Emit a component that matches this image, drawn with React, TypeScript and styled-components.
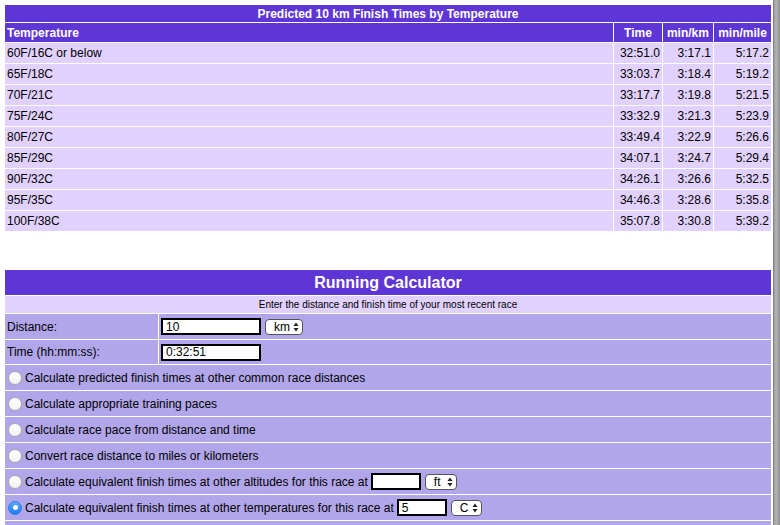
import React from "react";
import styled, { createGlobalStyle } from "styled-components";

const Global = createGlobalStyle`
  html, body { margin: 0; padding: 0; background: #fff; }
  body { font-family: "Liberation Sans", Arial, Helvetica, sans-serif; color: #000; }
`;

const PURPLE = "#5f36d6";
const LIGHT = "#e1d1fe";
const MID = "#b1a6ea";

const Page = styled.div`
  display: flex;
  width: 780px;
  height: 525px;
  overflow: hidden;
`;

const Content = styled.div`
  flex: 1;
  padding: 4px 1px 0 4px;
  display: flex;
  flex-direction: column;
  gap: 37px;
  min-width: 0;
`;

const Edge = styled.div`
  width: 7px;
  flex: none;
  background: linear-gradient(to right, #6d6d6d 0px, #9a9a9a 1px, #b4b4b4 3px, #9c9c9c 6px, #8a8a8a 7px);
`;

const Table = styled.table`
  width: 100%;
  border-collapse: separate;
  border-spacing: 1px;
  background: #fff;
  table-layout: fixed;
  font-size: 12px;
`;

const TitleCell = styled.th<{ $h: number; $size: number }>`
  background: ${PURPLE};
  color: #fff;
  font-weight: bold;
  font-size: ${(p) => p.$size}px;
  height: ${(p) => p.$h}px;
  padding: 0;
  text-align: center;
  vertical-align: middle;
`;

const HeadCell = styled.th<{ $align?: string }>`
  background: ${PURPLE};
  color: #fff;
  font-weight: bold;
  font-size: 12px;
  height: 19px;
  padding: 0 2px;
  text-align: ${(p) => p.$align || "center"};
  vertical-align: middle;
  white-space: nowrap;
`;

const DataCell = styled.td<{ $align?: string }>`
  background: ${LIGHT};
  height: 20px;
  padding: 0 2px;
  text-align: ${(p) => p.$align || "left"};
  vertical-align: middle;
  white-space: nowrap;
`;

const SubCell = styled.td`
  background: ${LIGHT};
  height: 17px;
  padding: 0;
  font-size: 10px;
  text-align: center;
  vertical-align: middle;
`;

const FormCell = styled.td<{ $h: number }>`
  background: ${MID};
  height: ${(p) => p.$h}px;
  padding: 0 2px;
  font-size: 12px;
  vertical-align: middle;
  white-space: nowrap;
`;

const Inline = styled.div`
  display: flex;
  align-items: center;
  gap: 4px;
`;

const RadioLine = styled.label`
  display: flex;
  align-items: center;
  gap: 3px;
  font-size: 12px;
`;

const Radio = styled.span<{ $on?: boolean }>`
  width: 14px;
  height: 14px;
  box-sizing: border-box;
  border-radius: 50%;
  flex: none;
  margin-left: 1px;
  display: flex;
  align-items: center;
  justify-content: center;
  border: 1px solid ${(p) => (p.$on ? "#2e7fe8" : "#a9a9a9")};
  background: ${(p) =>
    p.$on ? "linear-gradient(#5aa6ff, #1f7cf0)" : "linear-gradient(#ffffff, #f2f2f2)"};
  &::after {
    content: "";
    display: ${(p) => (p.$on ? "block" : "none")};
    width: 5px;
    height: 5px;
    border-radius: 50%;
    background: #fff;
  }
`;

const TextBox = styled.span<{ $w: number }>`
  display: inline-flex;
  align-items: center;
  box-sizing: border-box;
  width: ${(p) => p.$w}px;
  height: 17px;
  border: 2px solid #000;
  background: #fff;
  padding: 0 3px;
  font-size: 12px;
  flex: none;
`;

const Select = styled.span<{ $w: number }>`
  display: inline-flex;
  align-items: center;
  justify-content: space-between;
  box-sizing: border-box;
  width: ${(p) => p.$w}px;
  height: 16px;
  border: 1px solid #555;
  border-radius: 4px;
  background: #fff;
  padding: 0 3px 0 8px;
  font-size: 12px;
  flex: none;
`;

const Arrows = () => (
  <svg width="6" height="10" viewBox="0 0 6 10">
    <path d="M3 0.5 L5.5 4 L0.5 4 Z" fill="#222" />
    <path d="M3 9.5 L5.5 6 L0.5 6 Z" fill="#222" />
  </svg>
);

const rows: [string, string, string, string][] = [
  ["60F/16C or below", "32:51.0", "3:17.1", "5:17.2"],
  ["65F/18C", "33:03.7", "3:18.4", "5:19.2"],
  ["70F/21C", "33:17.7", "3:19.8", "5:21.5"],
  ["75F/24C", "33:32.9", "3:21.3", "5:23.9"],
  ["80F/27C", "33:49.4", "3:22.9", "5:26.6"],
  ["85F/29C", "34:07.1", "3:24.7", "5:29.4"],
  ["90F/32C", "34:26.1", "3:26.6", "5:32.5"],
  ["95F/35C", "34:46.3", "3:28.6", "5:35.8"],
  ["100F/38C", "35:07.8", "3:30.8", "5:39.2"],
];

export default function App() {
  return (
    <Page>
      <Global />
      <Content>
        <Table>
          <colgroup>
            <col />
            <col style={{ width: 48 }} />
            <col style={{ width: 50 }} />
            <col style={{ width: 57 }} />
          </colgroup>
          <thead>
            <tr>
              <TitleCell colSpan={4} $h={17} $size={12}>
                Predicted 10 km Finish Times by Temperature
              </TitleCell>
            </tr>
            <tr>
              <HeadCell $align="left">Temperature</HeadCell>
              <HeadCell>Time</HeadCell>
              <HeadCell>min/km</HeadCell>
              <HeadCell>min/mile</HeadCell>
            </tr>
          </thead>
          <tbody>
            {rows.map((r) => (
              <tr key={r[0]}>
                <DataCell>{r[0]}</DataCell>
                <DataCell $align="right">{r[1]}</DataCell>
                <DataCell $align="right">{r[2]}</DataCell>
                <DataCell $align="right">{r[3]}</DataCell>
              </tr>
            ))}
          </tbody>
        </Table>

        <Table>
          <colgroup>
            <col style={{ width: 153 }} />
            <col />
          </colgroup>
          <tbody>
            <tr>
              <TitleCell colSpan={2} $h={25} $size={16}>
                Running Calculator
              </TitleCell>
            </tr>
            <tr>
              <SubCell colSpan={2}>Enter the distance and finish time of your most recent race</SubCell>
            </tr>
            <tr>
              <FormCell $h={25}>Distance:</FormCell>
              <FormCell $h={25}>
                <Inline>
                  <TextBox $w={100}>10</TextBox>
                  <Select $w={38}>
                    km
                    <Arrows />
                  </Select>
                </Inline>
              </FormCell>
            </tr>
            <tr>
              <FormCell $h={24}>Time (hh:mm:ss):</FormCell>
              <FormCell $h={24}>
                <Inline>
                  <TextBox $w={100}>0:32:51</TextBox>
                </Inline>
              </FormCell>
            </tr>
            {[
              "Calculate predicted finish times at other common race distances",
              "Calculate appropriate training paces",
              "Calculate race pace from distance and time",
              "Convert race distance to miles or kilometers",
            ].map((t) => (
              <tr key={t}>
                <FormCell colSpan={2} $h={25}>
                  <RadioLine>
                    <Radio />
                    {t}
                  </RadioLine>
                </FormCell>
              </tr>
            ))}
            <tr>
              <FormCell colSpan={2} $h={25}>
                <RadioLine>
                  <Radio />
                  Calculate equivalent finish times at other altitudes for this race at
                  <Inline>
                    <TextBox $w={50} />
                    <Select $w={32}>
                      ft
                      <Arrows />
                    </Select>
                  </Inline>
                </RadioLine>
              </FormCell>
            </tr>
            <tr>
              <FormCell colSpan={2} $h={25}>
                <RadioLine>
                  <Radio $on />
                  Calculate equivalent finish times at other temperatures for this race at
                  <Inline>
                    <TextBox $w={50}>5</TextBox>
                    <Select $w={31}>
                      C
                      <Arrows />
                    </Select>
                  </Inline>
                </RadioLine>
              </FormCell>
            </tr>
            <tr>
              <FormCell colSpan={2} $h={25} />
            </tr>
          </tbody>
        </Table>
      </Content>
      <Edge />
    </Page>
  );
}
